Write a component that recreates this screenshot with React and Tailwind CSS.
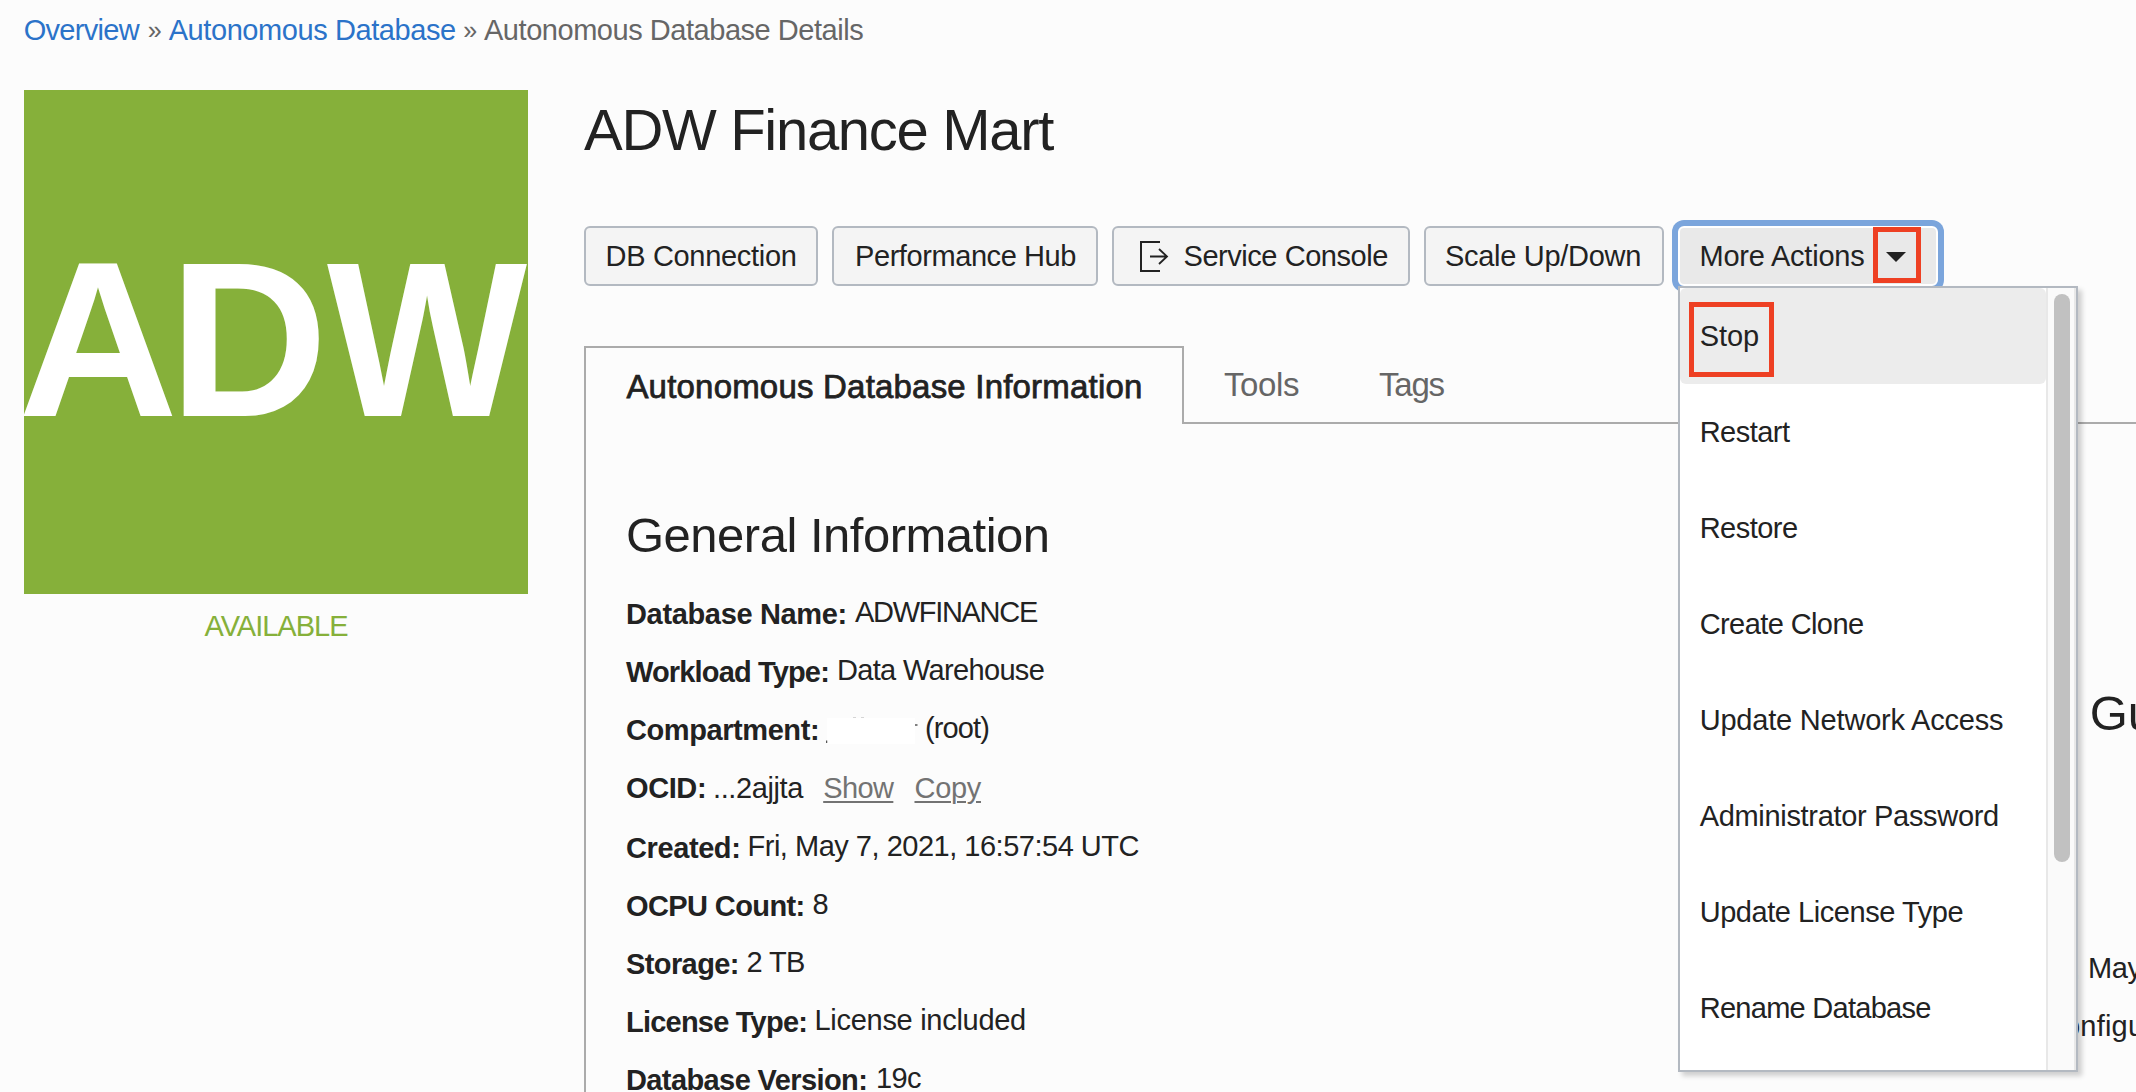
import React from "react";

const actionItems = [
  { label: "Stop", tracking: "tracking-[-0.1px]", active: true },
  { label: "Restart", tracking: "tracking-[-0.52px]" },
  { label: "Restore", tracking: "tracking-[-0.52px]" },
  { label: "Create Clone", tracking: "tracking-[-0.59px]" },
  { label: "Update Network Access", tracking: "tracking-[-0.2px]" },
  { label: "Administrator Password", tracking: "tracking-[-0.32px]" },
  { label: "Update License Type", tracking: "tracking-[-0.45px]" },
  { label: "Rename Database", tracking: "tracking-[-0.72px]" },
];

const identityFields = [
  { label: "Database Name:", lc: "w-[229px] tracking-[-0.34px]", value: "ADWFINANCE", vc: "tracking-[-1.3px]" },
  { label: "Workload Type:", lc: "w-[211px] tracking-[-0.85px]", value: "Data Warehouse", vc: "tracking-[-0.67px]" },
];

const detailFields = [
  { label: "Created:", lc: "w-[121.5px] tracking-[-0.4px]", value: "Fri, May 7, 2021, 16:57:54 UTC", vc: "tracking-[-0.49px]" },
  { label: "OCPU Count:", lc: "w-[186.5px] tracking-[-0.6px]", value: "8", vc: "" },
  { label: "Storage:", lc: "w-[120.5px] tracking-[-0.6px]", value: "2 TB", vc: "tracking-[-0.6px]" },
  { label: "License Type:", lc: "w-[188.5px] tracking-[-0.78px]", value: "License included", vc: "tracking-[-0.29px]" },
  { label: "Database Version:", lc: "w-[250px] tracking-[-0.6px]", value: "19c", vc: "tracking-[-0.63px]" },
];

function Field({ label, lc, value, vc }) {
  return (
    <div className="flex h-[58px] items-start">
      <dt className={`shrink-0 font-bold leading-[58px] ${lc}`}>{label}</dt>
      <dd className={`leading-[54px] ${vc}`}>{value}</dd>
    </div>
  );
}

function Button({ className, children }) {
  return (
    <button
      className={`flex h-[60px] shrink-0 items-center whitespace-nowrap rounded-[6px] border-2 border-[#b3b9c1] bg-[#f4f4f4] leading-[56px] ${className}`}
    >
      {children}
    </button>
  );
}

function LaunchIcon() {
  return (
    <svg width="30" height="32" viewBox="0 0 30 32" fill="none" stroke="#222" strokeWidth="2" className="mr-[14px] shrink-0">
      <path d="M20 2H1V31H20" />
      <path d="M10 16.5H27M19 9L27 16.5L19 24" strokeWidth="1.8" />
    </svg>
  );
}

function DatabaseTile() {
  return (
    <svg width="504" height="504" viewBox="0 0 504 504" className="block bg-[#86b03a]">
      <g fill="#fff" fontFamily="'Liberation Sans', sans-serif" fontWeight="700" fontSize="221">
        <text x="-6" y="326" textLength="160" lengthAdjust="spacingAndGlyphs">A</text>
        <text x="145" y="326" textLength="159" lengthAdjust="spacingAndGlyphs">D</text>
        <text x="303" y="326" textLength="200" lengthAdjust="spacingAndGlyphs">W</text>
      </g>
    </svg>
  );
}

function ActionsMenu() {
  return (
    <div className="absolute left-0 top-[60px] z-10 flex h-[786px] w-[400px] overflow-hidden border-2 border-[#b3b9c1] bg-white shadow-[4px_4px_5px_rgba(0,0,0,0.18)]">
      <ul className="w-[366px]">
        {actionItems.map((item) => (
          <li
            key={item.label}
            className={`relative h-24 whitespace-nowrap pl-[19.7px] leading-[96px] ${item.tracking} ${item.active ? "rounded-[6px] bg-[#ececec]" : ""}`}
          >
            {item.label}
            {item.active && (
              <span className="absolute left-[9px] top-[14px] h-[75px] w-[85px] border-5 border-[#ee4023]" />
            )}
          </li>
        ))}
      </ul>
      <div className="w-[30px] border-x-2 border-[#e8e8e8] bg-[#fafafa] pl-[6px] pt-[6px]">
        <div className="h-[568px] w-4 rounded-full bg-[#c1c1c1]" />
      </div>
    </div>
  );
}

function MoreActions() {
  return (
    <div className="relative h-[60px] w-[260px] shrink-0">
      <button className="flex h-[60px] w-[260px] items-center whitespace-nowrap rounded-[6px] border-2 border-white bg-[#e9e9e9] pl-[19.5px] leading-[56px] shadow-[0_0_0_6px_#7ba5dc]">
        <span className="tracking-[-0.22px]">More Actions</span>
      </button>
      <span className="absolute left-[195px] top-px flex h-[56px] w-[48px] items-center justify-center border-5 border-[#ee4023]">
        <svg width="20" height="10" viewBox="0 0 20 10" className="mb-[-4px] mr-[2px]">
          <path d="M0 0H20L10 10Z" fill="#222" />
        </svg>
      </span>
      <ActionsMenu />
    </div>
  );
}

export default function App() {
  return (
    <div className="h-[1092px] w-full overflow-hidden bg-[#fcfcfc] font-['Liberation_Sans',sans-serif] text-[29px] text-[#222]">
      <nav className="flex h-[60px] whitespace-nowrap pl-[23.7px] leading-[60px] text-[#666]">
        <a className="w-[124px] tracking-[-0.7px] text-[#2b73c9]">Overview</a>
        <span className="w-[21px] text-[25px]">»</span>
        <a className="w-[294.5px] tracking-[-0.42px] text-[#2b73c9]">Autonomous Database</a>
        <span className="w-[20.8px] text-[25px]">»</span>
        <span className="tracking-[-0.46px]">Autonomous Database Details</span>
      </nav>

      <div className="flex gap-14 pl-6 pt-[30px]">
        <aside className="w-[504px] shrink-0">
          <DatabaseTile />
          <p className="text-center leading-[64px] tracking-[-1px] text-[#86b03a]">AVAILABLE</p>
        </aside>

        <main className="min-w-0 flex-1">
          <h1 className="text-[58px] leading-[80px] tracking-[-1.3px]">ADW Finance Mart</h1>

          <div className="mt-14 flex gap-[14.5px]">
            <Button className="w-[233.5px] pl-[19.5px] tracking-[-0.31px]">DB Connection</Button>
            <Button className="w-[265.5px] pl-[21px] tracking-[-0.42px]">Performance Hub</Button>
            <Button className="w-[297.5px] pl-[25.5px] tracking-[-0.45px]">
              <LaunchIcon />
              Service Console
            </Button>
            <Button className="w-[239.5px] pl-[19px] tracking-[-0.29px]">Scale Up/Down</Button>
            <MoreActions />
          </div>

          <div className="mt-[60px] flex h-[78px] whitespace-nowrap text-[33px] leading-[77px]">
            <div className="w-[600px] shrink-0 border-2 border-b-0 border-[#ababab] pl-[40.4px] tracking-[0.2px] [-webkit-text-stroke:0.75px_#222]">
              Autonomous Database Information
            </div>
            <div className="flex flex-1 border-b-2 border-[#ababab] pl-10 text-[#666]">
              <span className="w-[155px] tracking-[-0.4px]">Tools</span>
              <span className="tracking-[-1.2px]">Tags</span>
            </div>
          </div>

          <section className="flex h-[668px] overflow-hidden border-l-2 border-[#ababab] whitespace-nowrap">
            <div className="flex-1 pl-10 pt-[71px]">
              <h2 className="text-[49px] leading-[80px] tracking-[-0.5px]">General Information</h2>
              <dl className="mt-[10px]">
                {identityFields.map((f) => (
                  <Field key={f.label} {...f} />
                ))}
                <div className="flex h-[58px] items-start">
                  <dt className="w-[200px] shrink-0 font-bold leading-[58px] tracking-[-0.42px]">Compartment:</dt>
                  <dd className="mt-[16px] h-[26px] w-[98.9px] shrink-0">
                    <svg width="98" height="28" viewBox="0 0 98 28" className="block">
                      <rect x="1" y="1" width="88" height="26" fill="#fff" />
                      <path d="M27 0.5h3M35 0.5h3" stroke="#d5d5d5" />
                      <path d="M0.5 23.5v2.5M89 8h2.5" stroke="#555" strokeWidth="1.5" />
                    </svg>
                  </dd>
                  <dd className="leading-[54px] tracking-[-0.87px]">(root)</dd>
                </div>
                <div className="flex h-[58px] items-start leading-[58px]">
                  <dt className="w-[87px] shrink-0 font-bold tracking-[-0.4px]">OCID:</dt>
                  <dd className="flex text-[#737373] underline-offset-[3px] decoration-2">
                    <span className="w-[110.2px] tracking-[-0.4px] text-[#222]">...2ajjta</span>
                    <span className="w-[91.3px]"><a className="tracking-[-0.6px] underline">Show</a></span>
                    <a className="tracking-[-0.3px] underline">Copy</a>
                  </dd>
                </div>
                <div className="pt-0.5">
                  {detailFields.map((f) => (
                    <Field key={f.label} {...f} />
                  ))}
                </div>
              </dl>
            </div>

            <div className="w-[72px] shrink-0 overflow-hidden pt-[249px]">
              <h2 className="pl-[25.7px] text-[49px] leading-[80px]">Gu</h2>
              <p className="mt-[188px] flex pl-[8px] leading-[54px] tracking-[-0.4px]">
                <span className="w-[16px] shrink-0">,</span>May
              </p>
              <p className="mt-1 leading-[54px] tracking-[0.2px]">onfigu</p>
            </div>
          </section>
        </main>
      </div>
    </div>
  );
}
